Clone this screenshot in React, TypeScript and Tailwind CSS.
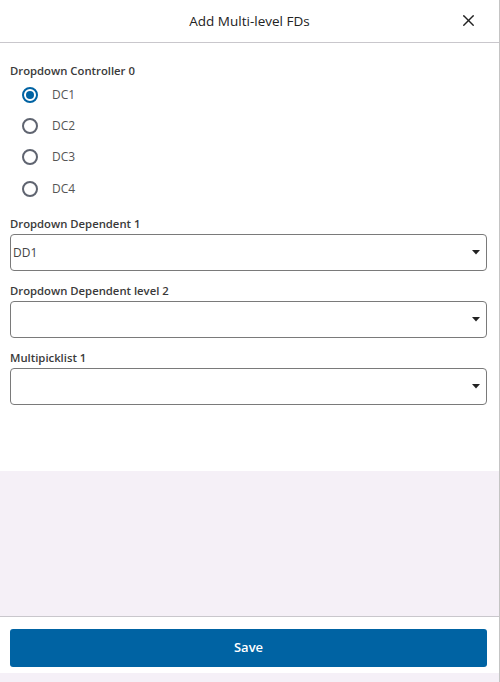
import { X } from 'lucide-react';

const options = ['DC1', 'DC2', 'DC3', 'DC4'];

const Caret = () => (
  <svg width="8" height="5" viewBox="0 0 8 5" className="shrink-0">
    <path d="M0 0h8L4 4.5z" fill="#222" />
  </svg>
);

const SelectField = ({ label, value }: { label: string; value?: string }) => (
  <div className="flex flex-col">
    <label className="text-[11.3px] font-semibold text-[#3a3a3a] leading-[16px] mb-[2px]">{label}</label>
    <div className="h-[37px] border border-[#7a7a7a] rounded-[4px] flex items-center justify-between pl-[2px] pr-[6px]">
      <span className="text-[12px] text-[#444]">{value}</span>
      <Caret />
    </div>
  </div>
);

export default function App() {
  return (
    <div
      className="w-[500px] h-[682px] bg-white flex flex-col border-r border-[#c4c4c4] overflow-hidden"
      style={{ fontFamily: '"Open Sans", "Noto Sans", sans-serif' }}
    >
      {/* Header */}
      <div className="h-[43px] shrink-0 relative flex items-center justify-center border-b border-[#c9c7cc]">
        <h1 className="text-[13.5px] text-[#222] font-normal">Add Multi-level FDs</h1>
        <button className="absolute right-[21px] top-[11px] text-[#222]">
          <X className="w-[19px] h-[19px]" strokeWidth={1.7} />
        </button>
      </div>

      {/* Form */}
      <div className="h-[428px] shrink-0 bg-white pl-[10px] pr-[12px] pt-[20px]">
        <div className="text-[11.3px] font-semibold text-[#3a3a3a] leading-[16px]">Dropdown Controller 0</div>
        <div className="flex flex-col">
          {options.map((o, i) => (
            <div key={o} className="h-[31.3px] flex items-center pl-[12px]">
              {i === 0 ? (
                <span className="w-[16px] h-[16px] rounded-full border-2 border-[#0063a3] flex items-center justify-center">
                  <span className="w-[8px] h-[8px] rounded-full bg-[#0063a3]" />
                </span>
              ) : (
                <span className="w-[16px] h-[16px] rounded-full border-2 border-[#5f6470]" />
              )}
              <span className="ml-[14px] text-[12px] text-[#555]">{o}</span>
            </div>
          ))}
        </div>
        <div className="flex flex-col gap-[12px] mt-[12px]">
          <SelectField label="Dropdown Dependent 1" value="DD1" />
          <SelectField label="Dropdown Dependent level 2" />
          <SelectField label="Multipicklist 1" />
        </div>
      </div>

      {/* Empty area */}
      <div className="flex-1 bg-[#f5f0f7] border-b border-[#c9c7cc]" />

      {/* Footer */}
      <div className="h-[56px] shrink-0 bg-white px-[10px] pt-[12px] pb-[6px] pr-[12px]">
        <button className="w-full h-[38px] rounded-[3px] bg-[#0063a3] text-white text-[13px] font-semibold">
          Save
        </button>
      </div>
      <div className="h-[9px] shrink-0 bg-[#f5f0f7]" />
    </div>
  );
}
